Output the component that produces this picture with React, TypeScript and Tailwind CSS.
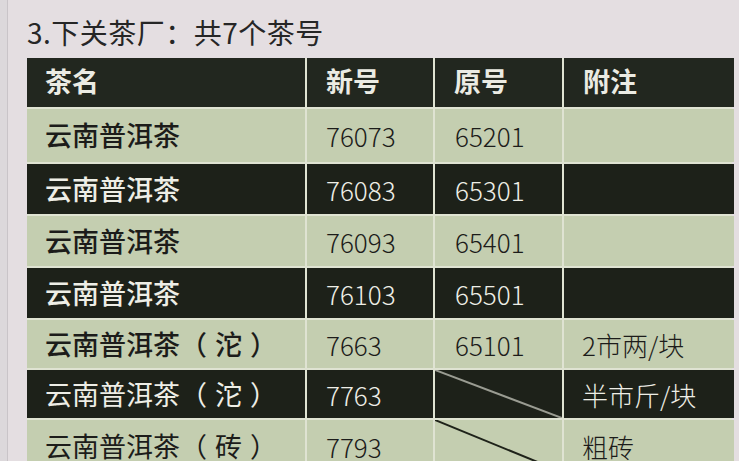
import React from "react";

type Row = {
    name: string;
    tag?: string;
    newNo: string;
    oldNo: string;
    note: string;
    dark: boolean;
    bold: boolean;
    h: string;
    slash?: "light" | "dark";
};

const rows: Row[] = [
    { name: "云南普洱茶", newNo: "76073", oldNo: "65201", note: "", dark: false, bold: true, h: "h-[53px]" },
    { name: "云南普洱茶", newNo: "76083", oldNo: "65301", note: "", dark: true, bold: true, h: "h-[50px]" },
    { name: "云南普洱茶", newNo: "76093", oldNo: "65401", note: "", dark: false, bold: true, h: "h-[50px]" },
    { name: "云南普洱茶", newNo: "76103", oldNo: "65501", note: "", dark: true, bold: true, h: "h-[50px]" },
    { name: "云南普洱茶", tag: "沱", newNo: "7663", oldNo: "65101", note: "2市两/块", dark: false, bold: true, h: "h-[48px]" },
    { name: "云南普洱茶", tag: "沱", newNo: "7763", oldNo: "", note: "半市斤/块", dark: true, bold: false, h: "h-[48px]", slash: "light" },
    { name: "云南普洱茶", tag: "砖", newNo: "7793", oldNo: "", note: "粗砖", dark: false, bold: false, h: "h-[52px]", slash: "dark" },
];

const font = { fontFamily: '"Noto Sans CJK SC", "Noto Sans", sans-serif' };

const Slash = ({ tone }: { tone: "light" | "dark" }) => (
    <svg className="absolute inset-0 w-full h-full" viewBox="0 0 100 100" preserveAspectRatio="none">
        <line
            x1="0"
            y1="0"
            x2="100"
            y2="100"
            stroke={tone === "light" ? "#9a9c92" : "#1e2219"}
            strokeWidth="2"
            vectorEffect="non-scaling-stroke"
        />
    </svg>
);

export default function App() {
    return (
        <div className="w-[739px] h-[461px] overflow-hidden flex bg-[#e4dee1]" style={font}>
            {/* page edge */}
            <div className="w-[8px] shrink-0 bg-[#dcd8db] border-r border-[#c9c4c8]" />

            <div className="flex-1 pl-[19px] pt-[14px]">
                <div className="text-[28px] leading-[36px] text-[#262626] tracking-[0.5px]">3.下关茶厂：共7个茶号</div>

                <div className="mt-[8px] w-[705px] grid grid-cols-[278px_126px_127px_170px] gap-[2px] bg-[#dfe3d2]">
                    {/* header */}
                    {["茶名", "新号", "原号", "附注"].map((t, i) => (
                        <div
                            key={i}
                            className={`h-[49px] bg-[#22271f] text-[#ebebe3] font-bold text-[27px] flex items-center pb-[2px] ${
                                i === 0 ? "pl-[18px]" : "pl-[19px]"
                            }`}
                        >
                            {t}
                        </div>
                    ))}

                    {rows.map((r, i) => {
                        const bg = r.dark ? "bg-[#1d2119]" : "bg-[#c4ceb0]";
                        const fg = r.dark ? "text-[#eeeee6]" : "text-[#1c1c1a]";
                        return (
                            <React.Fragment key={i}>
                                <div
                                    className={`${r.h} ${bg} ${fg} flex items-center pl-[18px] text-[27px] whitespace-nowrap ${
                                        r.bold ? "font-medium" : "font-normal"
                                    }`}
                                >
                                    {r.name}
                                    {r.tag && (
                                        <>
                                            （<span className="px-[8px]">{r.tag}</span>）
                                        </>
                                    )}
                                </div>
                                <div className={`${r.h} ${bg} ${fg} flex items-center pl-[19px] text-[26px] font-light`}>
                                    {r.newNo}
                                </div>
                                <div className={`${r.h} ${bg} ${fg} relative flex items-center pl-[20px] text-[26px] font-light`}>
                                    {r.slash && <Slash tone={r.slash} />}
                                    {r.oldNo}
                                </div>
                                <div className={`${r.h} ${bg} ${fg} flex items-center pl-[18px] text-[26px] font-light`}>
                                    {r.note}
                                </div>
                            </React.Fragment>
                        );
                    })}
                </div>
            </div>
        </div>
    );
}
